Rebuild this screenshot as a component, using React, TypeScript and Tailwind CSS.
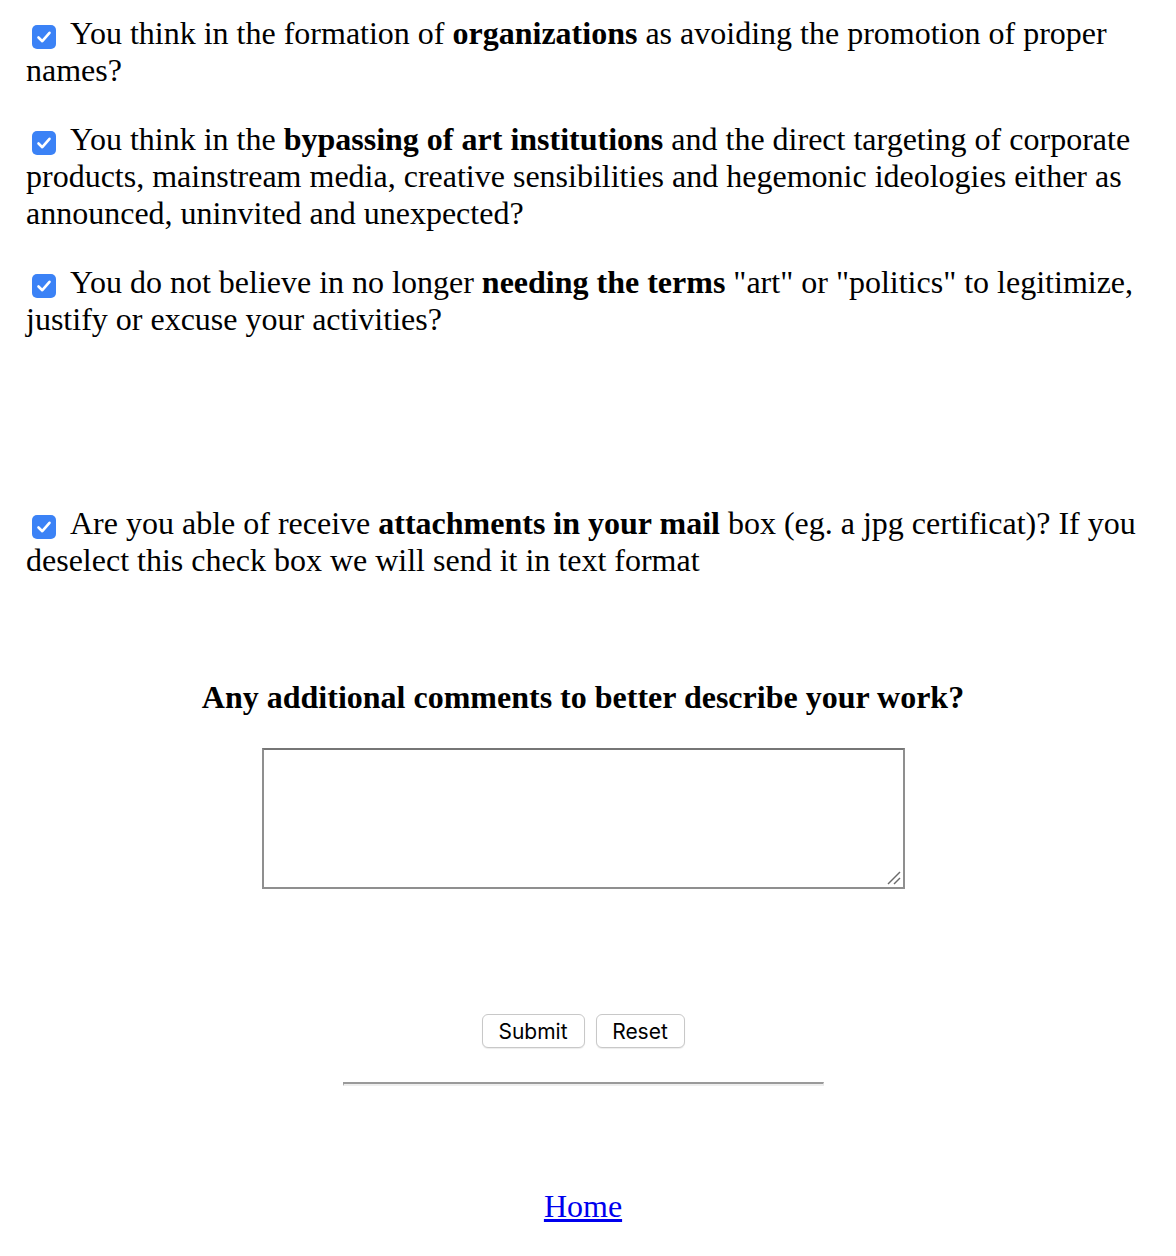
import React from "react";

function Check() {
  return (
    <span className="inline-block w-[24px] h-[24px] rounded-[5px] bg-[#3b82f6] align-[-5px] ml-[6px] mr-[14px]">
      <svg viewBox="0 0 24 24" width="24" height="24" className="block">
        <path d="M6.5 12.5 L10.3 16.2 L17.5 7.8" fill="none" stroke="#ffffff" strokeWidth="2.6" strokeLinecap="round" strokeLinejoin="round" />
      </svg>
    </span>
  );
}

export default function App() {
  return (
    <div className="bg-white text-black min-h-[1256px] pl-[26px] pr-[36px] pt-[15px] font-['Liberation_Serif',_'Times_New_Roman',_serif] text-[32px] leading-[37px]">
      <p>
        <Check />You think in the formation of <b>organizations</b> as avoiding the promotion of proper names?
      </p>
      <p className="mt-[32px]">
        <Check />You think in the <b>bypassing of art institutions</b> and the direct targeting of corporate products, mainstream media, creative sensibilities and hegemonic ideologies either as announced, uninvited and unexpected?
      </p>
      <p className="mt-[32px]">
        <Check />You do not believe in no longer <b>needing the terms</b> "art" or "politics" to legitimize, justify or excuse your activities?
      </p>
      <p className="mt-[167px]">
        <Check />Are you able of receive <b>attachments in your mail</b> box (eg. a jpg certificat)? If you deselect this check box we will send it in text format
      </p>
      <h3 className="mt-[100px] text-center font-bold">Any additional comments to better describe your work?</h3>
      <div className="flex justify-center mt-[32px]">
        <div className="relative w-[643px] h-[141px] border-2 border-t-[#767676] border-l-[#8f8f8f] border-r-[#8f8f8f] border-b-[#8f8f8f] bg-white">
          <svg className="absolute right-[1px] bottom-[1px]" width="18" height="18" viewBox="0 0 18 18">
            <line x1="4" y1="16" x2="16" y2="4" stroke="#6b6b6b" strokeWidth="1.5" />
            <line x1="10" y1="16" x2="16" y2="10" stroke="#6b6b6b" strokeWidth="1.5" />
          </svg>
        </div>
      </div>
      <div className="flex justify-center gap-[11px] mt-[125px]">
        <button className="h-[34px] w-[103px] pt-[2px] rounded-[6px] border border-[#c8c8c8] bg-white shadow-[0_1px_1px_rgba(0,0,0,0.08)] font-['Inter',_'Liberation_Sans',_sans-serif] text-[21px] leading-[30px] text-black">Submit</button>
        <button className="h-[34px] w-[89px] pt-[2px] rounded-[6px] border border-[#c8c8c8] bg-white shadow-[0_1px_1px_rgba(0,0,0,0.08)] font-['Inter',_'Liberation_Sans',_sans-serif] text-[21px] leading-[30px] text-black">Reset</button>
      </div>
      <div className="flex justify-center mt-[34px]">
        <div className="w-[481px] h-[4px] border-t-2 border-t-[#9a9a9a] border-l border-l-[#9a9a9a] border-r border-r-[#e6e6e6] border-b-2 border-b-[#eeeeee]"></div>
      </div>
      <div className="text-center mt-[102px]">
        <a href="#" className="text-[#0000ee] underline">Home</a>
      </div>
    </div>
  );
}
